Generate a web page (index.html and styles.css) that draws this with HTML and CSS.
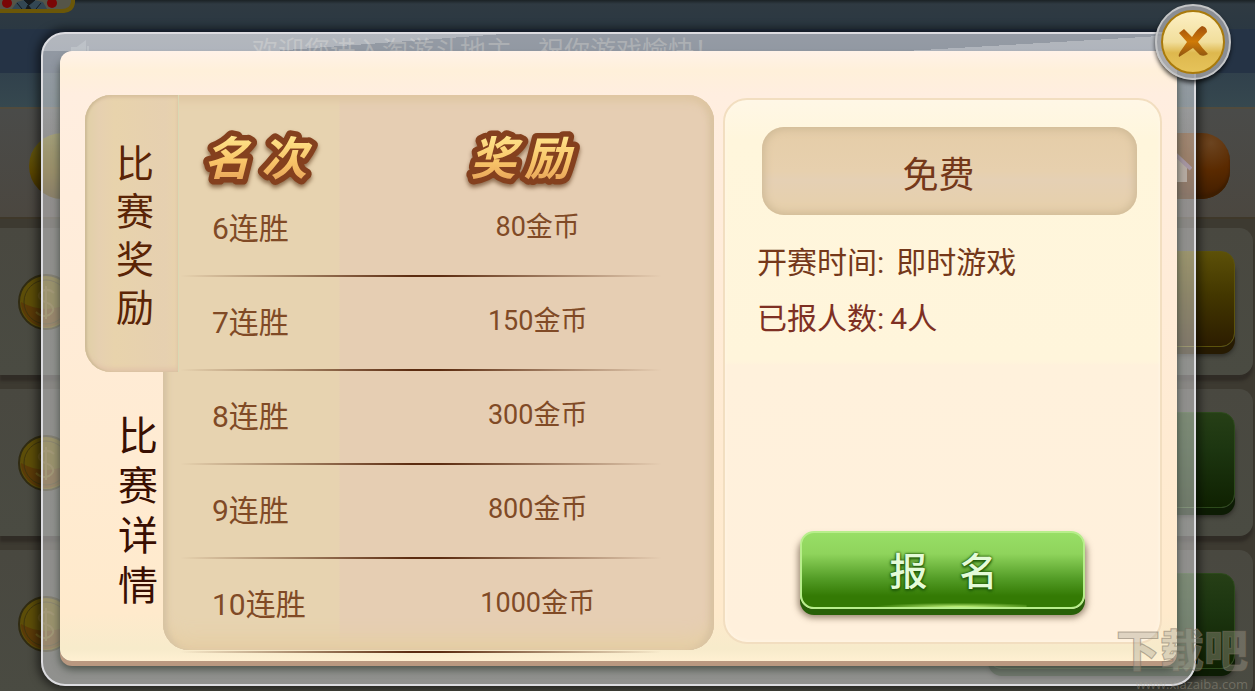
FILE: index.html
```html
<!DOCTYPE html>
<html lang="zh-CN">
<head>
    <meta charset="UTF-8">
    <meta name="viewport" content="width=device-width, initial-scale=1.0">
    <title>比赛奖励</title>
    <link rel="stylesheet" href="styles.css">
</head>
<body>
    <!-- Lobby behind the dialog -->
    <div class="lobby" aria-hidden="true">
        <div class="lobby-top">
            <svg class="avatar" width="76" height="14" viewBox="0 0 76 14">
                <path d="M0 0H75V3Q74 12 64 13H0Z" fill="#6b5708"/>
                <path d="M0 0H71V2Q70 9 62 9H0Z" fill="#555548"/>
                <path d="M12 9L17 2L24 0H34L43 2L47 9Z" fill="#334753"/>
                <path d="M24 0L29 5L35 0ZM17 3L22 9M41 3L36 9M26 9L28 5L31 9" fill="#17191a" stroke="#131a20"/>
                <circle cx="7" cy="3" r="5" fill="#7a0606"/>
                <circle cx="52" cy="3" r="5" fill="#7a0606"/>
            </svg>
        </div>
        <div class="marquee">
            <svg width="24" height="24" viewBox="0 0 24 24"><path d="M2 9H7L15 3V21L7 15H2ZM18 7V17" fill="#4a5866" stroke="#4a5866" stroke-width="2"/></svg>
            <span>欢迎您进入淘游斗地主，祝你游戏愉快！</span>
        </div>
        <div class="lobby-strip"></div>
        <div class="lobby-nav">
            <span class="nav-gold"></span>
            <span class="nav-home">
                <svg width="32" height="34" viewBox="0 0 32 34"><path d="M5 16V31H27V16L16 6Z" fill="#8b7865"/><path d="M1 18L16 4L31 18" fill="none" stroke="#6f5264" stroke-width="4"/></svg>
            </span>
        </div>
        <div class="room">
            <svg class="coin" width="56" height="56" viewBox="0 0 56 56"><circle cx="28" cy="28" r="27" fill="#5c4d08" stroke="#302b12" stroke-width="2"/><path d="M3 28A25 25 0 0 0 53 28Q28 42 3 28Z" fill="#5a3a08"/><circle cx="28" cy="28" r="22" fill="none" stroke="#3f350d"/><path d="M36 19Q31 14 24 17Q17 22 25 27L32 30Q39 36 31 41Q24 44 18 38M28 12V45" fill="none" stroke="#6a581a" stroke-width="2"/></svg>
            <span class="room-btn gold"></span>
        </div>
        <div class="room">
            <svg class="coin" width="56" height="56" viewBox="0 0 56 56"><circle cx="28" cy="28" r="27" fill="#5c4d08" stroke="#302b12" stroke-width="2"/><path d="M3 28A25 25 0 0 0 53 28Q28 42 3 28Z" fill="#5a3a08"/><circle cx="28" cy="28" r="22" fill="none" stroke="#3f350d"/><path d="M36 19Q31 14 24 17Q17 22 25 27L32 30Q39 36 31 41Q24 44 18 38M28 12V45" fill="none" stroke="#6a581a" stroke-width="2"/></svg>
            <span class="room-btn"></span>
        </div>
        <div class="room">
            <svg class="coin" width="56" height="56" viewBox="0 0 56 56"><circle cx="28" cy="28" r="27" fill="#5c4d08" stroke="#302b12" stroke-width="2"/><path d="M3 28A25 25 0 0 0 53 28Q28 42 3 28Z" fill="#5a3a08"/><circle cx="28" cy="28" r="22" fill="none" stroke="#3f350d"/><path d="M36 19Q31 14 24 17Q17 22 25 27L32 30Q39 36 31 41Q24 44 18 38M28 12V45" fill="none" stroke="#6a581a" stroke-width="2"/></svg>
            <span class="room-btn"></span>
        </div>
    </div>

    <div class="overlay">
        <div class="dialog" role="dialog" aria-label="比赛奖励">
            <button class="close" type="button" aria-label="关闭">
                <svg width="34" height="34" viewBox="0 0 34 34">
                    <defs>
                        <linearGradient id="cross" x1="0" y1="0" x2="0" y2="1">
                            <stop offset="0" stop-color="#a04f0c"/>
                            <stop offset="0.5" stop-color="#cf7a08"/>
                            <stop offset="1" stop-color="#8d5410"/>
                        </linearGradient>
                    </defs>
                    <path d="M3 8L8 4Q11 7 16 12Q22 3 26 1Q31 2 31 7Q27 11 22 17Q26 23 32 29Q28 32 24 30L17 23Q11 27 3 32Q2 30 4 27L11 17Z" fill="url(#cross)"/>
                </svg>
            </button>

            <div class="panel">
                <nav class="tabs">
                    <button class="tab active" type="button"><span>比赛奖励</span></button>
                    <button class="tab" type="button"><span>比赛详情</span></button>
                </nav>

                <div class="rewards">
                    <table>
                        <thead>
                            <tr>
                                <th scope="col">
                                    <svg class="title" width="112" height="64" viewBox="0 0 112 64">
                                        <defs>
                                            <linearGradient id="gold" x1="0" y1="0" x2="0" y2="1">
                                                <stop offset="0.2" stop-color="#ffe58c"/>
                                                <stop offset="0.6" stop-color="#f8c468"/>
                                                <stop offset="1" stop-color="#e39a55"/>
                                            </linearGradient>
                                        </defs>
                                        <text x="0 57" y="58" fill="url(#gold)">名次</text>
                                    </svg>
                                </th>
                                <th scope="col">
                                    <svg class="title" width="112" height="64" viewBox="0 0 112 64">
                                        <text x="4 58" y="58" fill="url(#gold)">奖励</text>
                                    </svg>
                                </th>
                            </tr>
                        </thead>
                        <tbody>
                            <tr><td>6连胜</td><td>80金币</td></tr>
                            <tr><td>7连胜</td><td>150金币</td></tr>
                            <tr><td>8连胜</td><td>300金币</td></tr>
                            <tr><td>9连胜</td><td>800金币</td></tr>
                            <tr><td>10连胜</td><td>1000金币</td></tr>
                        </tbody>
                    </table>
                </div>

                <section class="signup">
                    <div class="fee">免费</div>
                    <dl class="info">
                        <div class="info-row"><dt>开赛时间:</dt><dd>即时游戏</dd></div>
                        <div class="info-row people"><dt>已报人数:</dt><dd>4人</dd></div>
                    </dl>
                    <button class="join" type="button"><span>报</span><span>名</span></button>
                </section>
            </div>
        </div>
    </div>

    <div class="watermark">
        <span class="mark-name">下载吧</span>
        <span class="mark-url">www.xiazaiba.com</span>
    </div>
</body>
</html>
```

FILE: styles.css
```css
* {
    box-sizing: border-box;
}
body {
    margin: 0;
    height: 100vh;
    overflow: hidden;
    position: relative;
    background: #3d3a31;
    color: #74381a;
    font-family: Roboto, "Noto Sans CJK SC", sans-serif;
}
button {
    font-family: inherit;
    border: 0;
    padding: 0;
    cursor: pointer;
}

/* lobby */
.lobby {
    height: 100%;
    overflow: hidden;
}
.lobby-top {
    height: 29px;
    background: linear-gradient(#1b2225, #2f3a42 4px, #2b3842);
}
.avatar {
    display: block;
}
.marquee {
    height: 44px;
    padding-left: 70px;
    display: flex;
    align-items: center;
    gap: 158px;
    background: #253345;
    color: #5c6268;
    font-size: 26px;
    line-height: 40px;
    white-space: nowrap;
}
.lobby-strip {
    height: 34px;
    background: linear-gradient(#31414c, #36484f);
}
.lobby-nav {
    height: 112px;
    padding: 6px 25px 0 29px;
    display: flex;
    justify-content: space-between;
    align-items: center;
    border-top: 2px solid #514b3d;
    border-bottom: 2px solid #3f382a;
    background: linear-gradient(#4a4b49, #4b4740);
}
.nav-gold {
    width: 66px;
    height: 66px;
    border-radius: 50%;
    background: linear-gradient(#676018, #594500 60%, #3d2b00);
}
.nav-home {
    width: 76px;
    height: 66px;
    padding: 18px 6px;
    border-radius: 12px 28px 28px 12px;
    background: radial-gradient(ellipse at 75% 15%, #6b4420, #5a2a00 35%, #391900 80%);
    box-shadow: inset 0 -4px 2px #3e1e00;
}
.room {
    height: 147px;
    margin: 9px 2px 14px 0;
    padding: 0 18px;
    display: flex;
    justify-content: space-between;
    align-items: center;
    border-radius: 0 14px 14px 0;
    background: linear-gradient(#494840, #4a4b42);
    box-shadow: 0 6px 3px #302c26;
}
.room + .room {
    margin-top: 0;
}
.room-btn {
    width: 247px;
    height: 96px;
    margin-bottom: 6px;
    border-radius: 14px;
    border: 1px solid #2d4a1c;
    background: linear-gradient(#263f16, #1c3510 40%, #0f2101);
    box-shadow: 0 7px 0 #0d1c04, 0 9px 4px #2d2c26;
}
.room-btn.gold {
    border-color: #5c530c;
    background: linear-gradient(#5c5008, #433700 45%, #2c1d00);
    box-shadow: 0 7px 0 #271b02, 0 9px 4px #2d2c26;
}

/* dialog */
.overlay {
    position: absolute;
    inset: 0;
    padding: 32px 59px 5px 41px;
}
.dialog {
    position: relative;
    padding: 17px 17px 23px;
    border: 2px solid #dcdce0;
    border-radius: 24px;
    background:
        linear-gradient(rgba(255, 255, 255, 0.28), rgba(255, 255, 255, 0.28)) 0 0 / 20% 17px no-repeat,
        linear-gradient(to bottom right, rgba(255, 255, 255, 0.28) 50%, transparent 50%) 25% 0 / 20% 17px no-repeat,
        linear-gradient(to bottom right, transparent 50%, rgba(255, 255, 255, 0.28) 50%) 100% 0 / 25% 17px no-repeat,
        linear-gradient(rgba(255, 255, 255, 0.2), transparent 120px),
        rgba(235, 235, 240, 0.44);
    box-shadow: 0 0 8px 4px rgba(0, 0, 0, 0.5);
}
.panel {
    display: grid;
    grid-template-columns: 78px 551fr 448fr;
    padding: 44px 15px 11px 25px;
    border-radius: 12px;
    background: linear-gradient(#fff2e8, #fff0da 20px, #ffeee0 44px, #ffecd8 40%, #ffeacc 92%, #f7ebcb 98%, #fff0d2);
    box-shadow: 0 5px 0 #b99880, 0 8px 8px rgba(50, 60, 50, 0.8);
}
.close {
    position: absolute;
    top: -30px;
    right: -37px;
    width: 76px;
    height: 76px;
    display: flex;
    justify-content: center;
    align-items: center;
    border: 2px solid #c4c5c6;
    border-radius: 50%;
    background: rgba(155, 158, 162, 0.85);
    box-shadow: 0 3px 4px rgba(0, 0, 0, 0.7);
}
.close::before {
    content: "";
    position: absolute;
    inset: 4px;
    border: 2px solid #a97a0c;
    border-radius: 50%;
    background: linear-gradient(#fdf0c4, #f1de9c 50%, #deb84e 68%, #e6c35a);
}
.close svg {
    position: relative;
}

/* tabs */
.tabs {
    display: flex;
    flex-direction: column;
    align-items: flex-start;
}
.tab {
    width: 78px;
    padding: 40px 0 0 33px;
    background: none;
    color: #390f02;
    font-size: 40px;
    line-height: 50px;
    text-align: left;
}
.tab span {
    display: block;
    width: 1em;
    word-break: break-all;
}
.tab.active {
    position: relative;
    z-index: 1;
    width: 94px;
    height: 277px;
    padding: 4px 0 0 31px;
    border-radius: 26px 0 0 26px;
    background: linear-gradient(90deg, #e0d0a6, #e6d0b0 14px, #e8d3ac 30px, #e6d0b0 80px, #e8d3ac);
    box-shadow: inset 2px 0 2px #cfbd98, inset 0 3px 3px #dbc3a1, inset 0 -4px 4px #e2c5a8;
    border-right: 1px solid #d9d9b4;
    color: #5a2406;
    font-size: 38px;
    line-height: 48px;
}

/* rewards */
.rewards {
    padding: 0 52px 0 17px;
    border-radius: 0 26px 26px 26px;
    background: linear-gradient(90deg, #e7d3b0 176px, #e6ceb3 177px);
    box-shadow: inset 0 10px 8px -4px #dfc6a2, inset -8px 0 6px -3px #d9c3a2, inset 8px 0 6px -4px #d6c3a3, inset 0 -24px 16px -10px #e6cfa6, inset 0 -4px 4px #c9b79d;
}
.rewards table {
    width: 100%;
    margin-bottom: -3px;
    border-collapse: collapse;
    table-layout: fixed;
}
th {
    height: 88px;
    padding: 22px 0 0 24px;
    text-align: left;
    vertical-align: top;
}
th:first-child {
    width: 48%;
}
th + th {
    padding: 22px 30px 0 0;
}
.title {
    display: block;
    overflow: visible;
    filter: drop-shadow(0 3px 2px rgba(80, 40, 10, 0.6));
}
th + th .title {
    margin: 0 auto;
}
.title text {
    font: italic 700 46px "Noto Sans CJK SC", sans-serif;
    stroke: #84401e;
    stroke-width: 11px;
    stroke-linejoin: round;
    paint-order: stroke;
}
tbody tr {
    background: linear-gradient(90deg, transparent, #5c2c10 48%, #5c2c10 54%, transparent) bottom / 100% 2px no-repeat;
}
td {
    height: 94px;
    padding: 0 0 8px 32px;
    font-size: 30px;
    color: #804a26;
}
td + td {
    padding: 0 0 12px 2px;
    font-size: 27px;
    text-align: center;
}

/* signup */
.signup {
    display: flex;
    flex-direction: column;
    margin: 3px 0 6px 9px;
    padding: 27px 23px 33px 32px;
    border: 2px solid #f2dec0;
    border-radius: 24px;
    background: linear-gradient(#fff7e6, #fff6dc 40px, #fff5db 48%, #fff1dc 49%, #fff0dc);
    box-shadow: inset 0 0 4px #fff8e8;
}
.fee {
    height: 88px;
    margin-left: 5px;
    padding-right: 22px;
    border-radius: 22px;
    background: linear-gradient(#e5cda8, #e7d0ae 50%, #e5d0b4 60%, #e7d0aa);
    box-shadow: inset 0 0 8px 2px #cdb895;
    font-size: 36px;
    line-height: 98px;
    text-align: center;
}
.info {
    margin: 20px 0 auto;
    font-size: 30px;
    line-height: 56px;
}
.info-row {
    display: flex;
    gap: 12px;
}
.people {
    gap: 6px;
    color: #7e3023;
}
.info dd {
    margin: 0;
}
.join {
    align-self: center;
    width: 285px;
    height: 78px;
    margin-right: 9px;
    padding: 0 0 3px 2px;
    display: flex;
    justify-content: center;
    align-items: center;
    gap: 32px;
    border: 2px solid #b8ee8c;
    border-radius: 14px;
    background:
        radial-gradient(ellipse at 60% 100%, #c8f880, transparent 60%) bottom / 60% 5px no-repeat,
        linear-gradient(#98de66, #8fd45c 28%, #539c26 62%, #347a04 85%, #347a04);
    box-shadow: 0 6px 0 #286008, 0 7px 6px 2px rgba(90, 70, 50, 0.6);
    color: #e4fbd8;
    font-size: 38px;
    font-weight: 500;
    text-shadow: 0 0 3px #1f5a08, 0 2px 3px #1f5a08, 0 0 2px #1f5a08;
}

/* watermark */
.watermark {
    position: absolute;
    right: 7px;
    bottom: 0;
    display: flex;
    flex-direction: column;
    align-items: flex-end;
    color: rgba(170, 165, 150, 0.4);
}
.mark-name {
    font-size: 44px;
    font-weight: 900;
    line-height: 50px;
    -webkit-text-stroke: 1px rgba(120, 110, 95, 0.5);
}
.mark-url {
    font-family: "Open Sans", sans-serif;
    font-size: 13px;
    line-height: 14px;
}
```
